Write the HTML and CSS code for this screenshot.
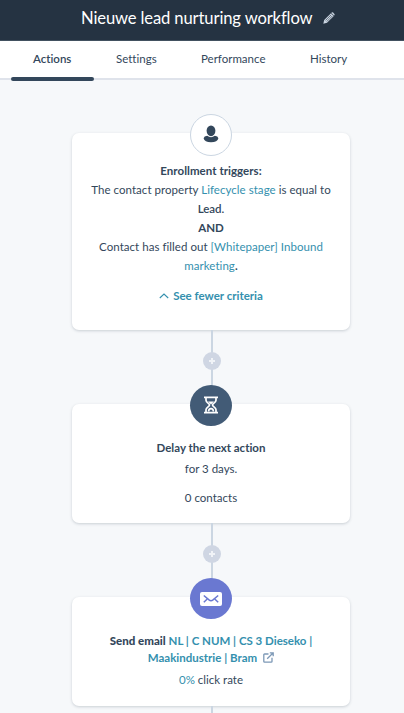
FILE: index.html
```html
<!DOCTYPE html>
<html lang="en">
<head>
    <meta charset="UTF-8">
    <meta name="viewport" content="width=device-width, initial-scale=1.0">
    <title>Nieuwe lead nurturing workflow</title>
    <link rel="stylesheet" href="styles.css">
</head>
<body>
    <header class="topbar">
        <h1>Nieuwe lead nurturing workflow</h1>
        <svg class="pencil" viewBox="0 0 12 12" width="12" height="12">
            <path d="M0.3 11.7L1.2 8L8 1.2L10.8 4L4 10.8Z" fill="#cbd6e2"/>
            <path d="M8.7 0.6Q9.4 0 10.1 0.6L11.4 1.9Q12 2.6 11.4 3.3L11.1 3.6L8.4 0.9Z" fill="#cbd6e2"/>
            <path d="M2.6 8.4L8.3 2.7M3.8 9.5L9.5 3.8" stroke="#253342" stroke-width="0.6"/>
        </svg>
    </header>

    <nav class="tabs">
        <a class="tab active">Actions</a>
        <a class="tab settings">Settings</a>
        <a class="tab performance">Performance</a>
        <a class="tab history">History</a>
    </nav>

    <main class="workflow">
        <section class="card triggers">
            <div class="badge contact">
                <svg viewBox="0 0 16 18" width="16" height="18">
                    <path d="M0.6 13.2Q1 11.2 4.2 10.8Q8 13.6 11.8 10.8Q15 11.2 15.4 13.2Q14.5 17.3 8 17.3Q1.5 17.3 0.6 13.2Z" fill="#33475b"/>
                    <ellipse cx="8" cy="5.8" rx="4.4" ry="5.4" fill="#33475b"/>
                </svg>
            </div>
            <p class="line enrollment"><strong>Enrollment triggers:</strong></p>
            <p class="line property">The contact property <a>Lifecycle stage</a> is equal to</p>
            <p class="line"><b>Lead.</b></p>
            <p class="line"><strong>AND</strong></p>
            <p class="line filled">Contact has filled out <a>[Whitepaper] Inbound</a></p>
            <p class="line marketing"><a>marketing</a><strong>.</strong></p>
            <p class="line toggle">
                <svg viewBox="0 0 10 6" width="10" height="6"><path d="M0.8 5L5 1L9.2 5" fill="none" stroke="#3490ae" stroke-width="1.1"/></svg>
                <a>See fewer criteria</a>
            </p>
        </section>

        <div class="connector"><span class="plus"></span></div>

        <section class="card delay">
            <div class="badge wait">
                <svg viewBox="0 0 16 18" width="16" height="18" fill="none" stroke="#fff">
                    <path d="M1 1.4H15M1 16.6H15" stroke-width="1.8"/>
                    <path d="M3 2V4.2C3 6.8 6.5 7.3 6.5 9C6.5 10.7 3 11.2 3 13.8V16M13 2V4.2C13 6.8 9.5 7.3 9.5 9C9.5 10.7 13 11.2 13 13.8V16" stroke-width="1.7"/>
                    <path d="M5 5.6H11L8 8.6Z" fill="#fff" stroke="none"/>
                    <path d="M5.6 15.5Q5.6 12.6 8 12.6Q10.4 12.6 10.4 15.5" stroke-width="1.6"/>
                </svg>
            </div>
            <p class="line delay-title"><strong>Delay the next action</strong></p>
            <p class="line days">for 3 days.</p>
            <p class="line contacts">0 contacts</p>
        </section>

        <div class="connector"><span class="plus"></span></div>

        <section class="card email">
            <div class="badge mail">
                <svg viewBox="0 0 22 14" width="22" height="14">
                    <rect width="22" height="14" rx="2" fill="#fff"/>
                    <path d="M3.8 3.5L9 7.9Q11 9.5 13 7.9L18.2 3.5M3.8 10.2L7 7.2M18.2 10.2L15 7.2" fill="none" stroke="#6a78d1" stroke-width="1.5"/>
                </svg>
            </div>
            <p class="line email-name"><strong>Send email</strong> <a>NL | C NUM | CS 3 Dieseko |</a></p>
            <p class="line email-more"><a>Maakindustrie | Bram</a>
                <svg viewBox="0 0 11 11" width="11" height="11" fill="none" stroke="#7c98b6" stroke-width="1.3"><path d="M5.5 2H1.6Q0.8 2 0.8 2.8V9.4Q0.8 10.2 1.6 10.2H8.2Q9 10.2 9 9.4V5.8M4.2 6.8L10 1M6.8 0.8H10.2V4.2"/></svg>
            </p>
            <p class="line rate"><a>0%</a> click rate</p>
        </section>

        <div class="connector last"></div>
    </main>
</body>
</html>
```
FILE: styles.css
```css
* {
    box-sizing: border-box;
}
body {
    margin: 0;
    background-color: #f6f8fa;
    color: #33475b;
    font-family: Lato, "Liberation Sans", sans-serif;
    font-size: 11.5px;
    font-variant-ligatures: none;
}
h1, p {
    margin: 0;
}
.topbar {
    display: flex;
    height: 41px;
    padding: 0 0 5px 81px;
    align-items: center;
    background-color: #253342;
    border-bottom: 1px solid #425160;
}
h1 {
    width: 232px;
    color: #fff;
    font-size: 16.6px;
    font-weight: 400;
    letter-spacing: -0.13px;
    white-space: nowrap;
}
.pencil {
    margin-left: 10px;
}
.tabs {
    display: flex;
    height: 39px;
    padding-left: 11px;
    background-color: #fff;
    border-bottom: 2px solid #dfe3eb;
}
.tab {
    height: 40px;
    padding-left: 22px;
    line-height: 36px;
    white-space: nowrap;
}
.tab.active {
    position: relative;
    width: 83px;
    font-weight: 600;
}
.tab.active::after {
    content: "";
    position: absolute;
    left: 0;
    bottom: 0;
    width: 83px;
    height: 4px;
    border-radius: 2px;
    background-color: #33475b;
}
.settings {
    width: 85px;
}
.performance {
    width: 109px;
}
.workflow {
    width: 280px;
    margin-left: 71px;
    padding-top: 53px;
}
.card {
    display: flex;
    flex-direction: column;
    align-items: center;
    margin: 0 1px;
    background-color: #fff;
    border-radius: 7px;
    box-shadow: 0 1px 3px rgba(45, 62, 80, 0.22);
}
.triggers {
    height: 197px;
}
.delay {
    height: 119px;
}
.email {
    height: 109px;
}
.badge {
    display: flex;
    flex-shrink: 0;
    width: 42px;
    height: 42px;
    margin-top: -19px;
    align-items: center;
    justify-content: center;
    border-radius: 50%;
    z-index: 1;
}
.contact {
    margin-bottom: 5px;
    padding-bottom: 2px;
    background-color: #fff;
    border: 1px solid #cbd6e2;
}
.wait {
    height: 41px;
    margin-bottom: 12px;
    padding-bottom: 2px;
    background-color: #425b76;
}
.mail {
    height: 41px;
    margin-bottom: 13px;
    background-color: #6a78d1;
}
.line {
    height: 19px;
    line-height: 19px;
    white-space: nowrap;
}
.line a {
    color: #3490ae;
}
.line b {
    font-weight: 600;
}
.enrollment, .property, .filled, .marketing {
    letter-spacing: 0.04px;
}
.toggle {
    display: flex;
    margin-top: 11px;
    align-items: center;
    gap: 4px;
    font-weight: 700;
}
.days {
    margin-top: 2px;
}
.contacts {
    margin-top: 10px;
}
.email-name, .email-more {
    height: 17px;
    line-height: 17px;
    font-weight: 700;
}
.email-more {
    display: flex;
    align-items: center;
    gap: 6px;
}
.rate {
    margin-top: 4px;
}
.connector {
    display: flex;
    width: 2px;
    height: 74px;
    margin-left: 140px;
    padding-top: 22px;
    justify-content: center;
    background-color: #cbd6e2;
}
.connector.last {
    height: 7px;
    padding-top: 0;
}
.plus {
    display: grid;
    flex-shrink: 0;
    width: 18px;
    height: 18px;
    place-items: center;
    border-radius: 50%;
    background-color: #cfd6e3;
}
.plus::before, .plus::after {
    content: "";
    grid-area: 1 / 1;
    width: 6px;
    height: 2px;
    background-color: #f0f3f7;
}
.plus::after {
    width: 2px;
    height: 6px;
}
```
